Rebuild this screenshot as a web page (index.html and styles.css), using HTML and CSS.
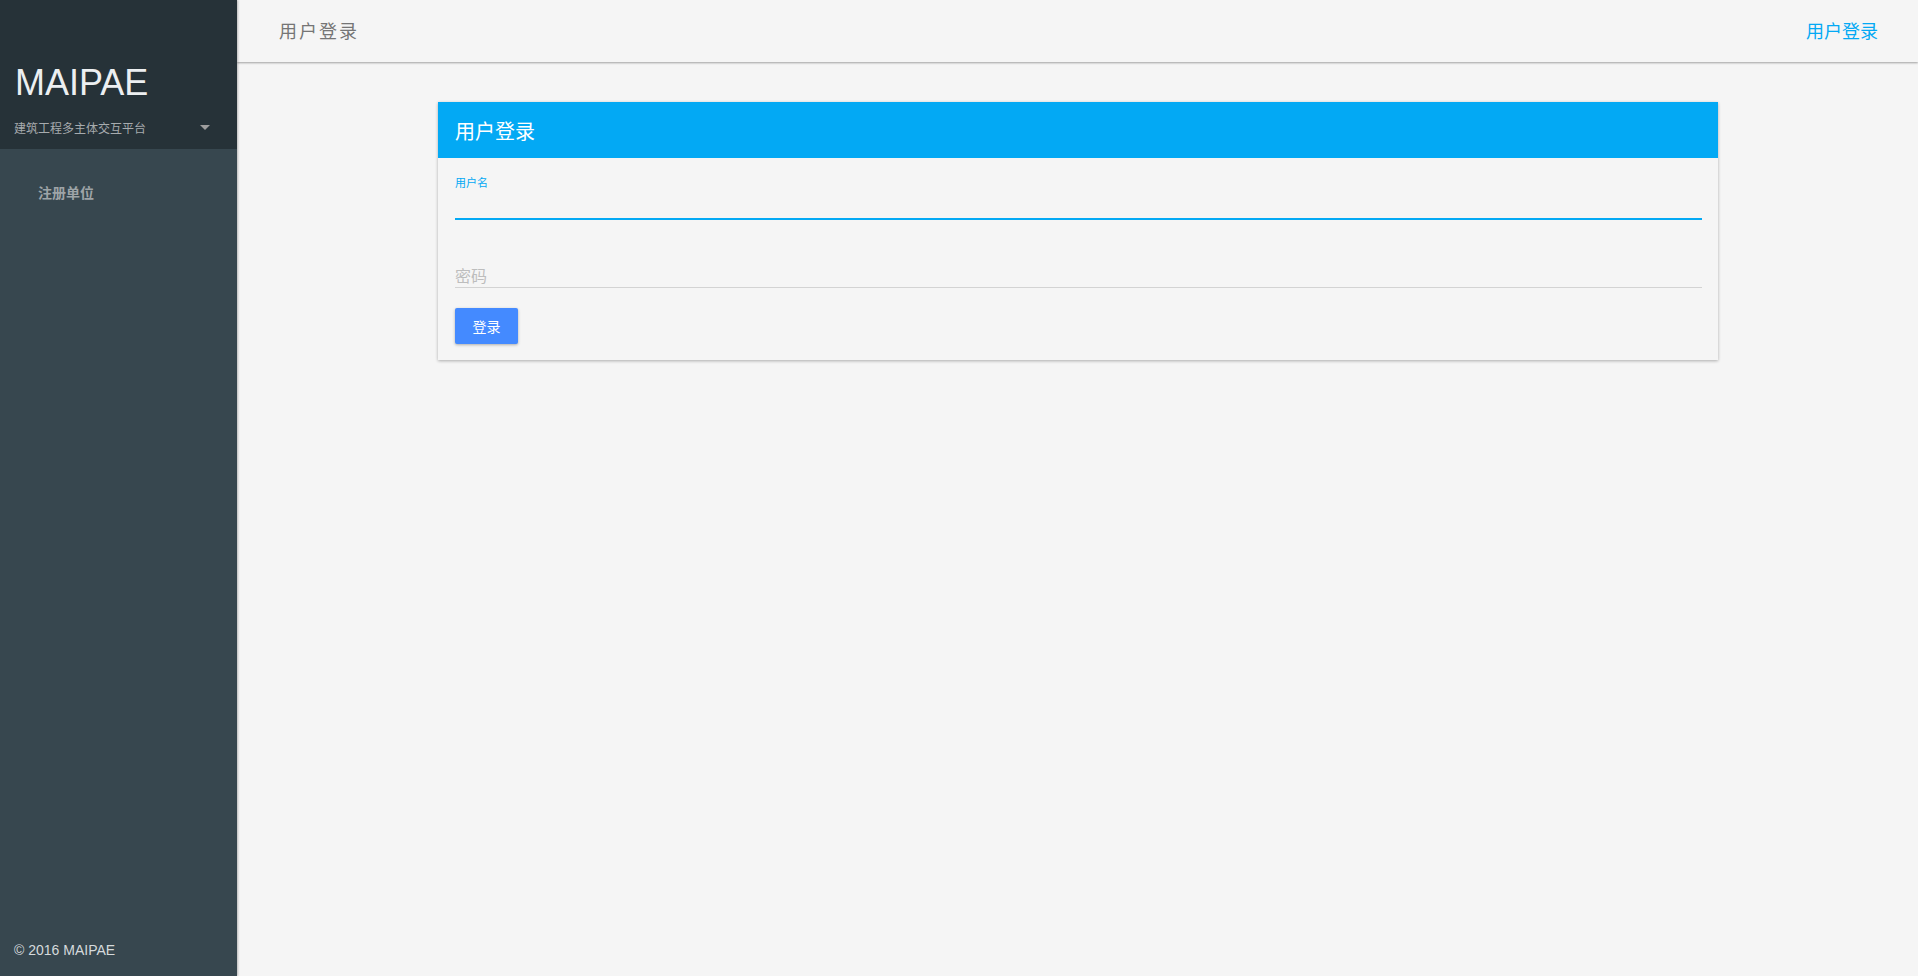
FILE: index.html
```html
<!DOCTYPE html>
<html lang="zh-CN">
<head>
    <meta charset="UTF-8">
    <meta name="viewport" content="width=device-width, initial-scale=1.0">
    <title>用户登录</title>
    <link rel="stylesheet" href="styles.css">
</head>
<body>

<div class="layout">
    <aside class="sidebar">
        <div class="brand">
            <div class="brand-name">MAIPAE</div>
            <div class="brand-sub">
                <span>建筑工程多主体交互平台</span>
                <span class="caret"></span>
            </div>
        </div>
        <nav class="menu">
            <a class="menu-item" href="#">注册单位</a>
        </nav>
        <div class="copyright">© 2016 MAIPAE</div>
    </aside>

    <div class="main">
        <header class="topbar">
            <div class="topbar-title">用户登录</div>
            <a class="topbar-link" href="#">用户登录</a>
        </header>

        <div class="content">
            <div class="card">
                <div class="card-header">用户登录</div>
                <div class="card-body">
                    <div class="field field-active">
                        <label for="username">用户名</label>
                        <input type="text" id="username">
                    </div>
                    <div class="field">
                        <input type="password" id="password" placeholder="密码">
                    </div>
                    <button class="btn-login">登录</button>
                </div>
            </div>
        </div>
    </div>
</div>

</body>
</html>
```

FILE: styles.css
```css
html, body{
    height:100%;
}
body{
    margin:0;
    padding:0;
    font-family:"Liberation Sans", Arial, "Noto Sans CJK SC", sans-serif;
    background-color:#f5f5f5;
}
.layout{
    display:flex;
    height:100%;
}
.sidebar{
    width:237px;
    flex-shrink:0;
    display:flex;
    flex-direction:column;
    background-color:#37474f;
    box-shadow:1px 0 2px rgba(0, 0, 0, 0.25);
    position:relative;
    z-index:2;
}
.brand{
    height:149px;
    box-sizing:border-box;
    padding:62px 0 0 14px;
    background-color:#263238;
}
.brand-name{
    font-size:36px;
    line-height:41px;
    color:#eceff1;
    padding-left:1px;
}
.brand-sub{
    display:flex;
    align-items:center;
    justify-content:space-between;
    margin-top:16px;
    padding-right:27px;
    font-size:12px;
    color:#a6abae;
}
.caret{
    width:0;
    height:0;
    border-left:5px solid transparent;
    border-right:5px solid transparent;
    border-top:5px solid #9e9e9e;
}
.menu{
    flex:1;
    padding-top:33px;
}
.menu-item{
    display:block;
    padding-left:38px;
    font-family:"Noto Sans CJK SC", sans-serif;
    font-size:14px;
    font-weight:700;
    color:#9ea4a7;
    text-decoration:none;
}
.copyright{
    padding:0 0 18px 14px;
    font-size:14px;
    color:#d5dadc;
}
.main{
    flex:1;
    display:flex;
    flex-direction:column;
}
.topbar{
    height:62px;
    flex-shrink:0;
    display:flex;
    align-items:center;
    justify-content:space-between;
    padding:0 40px 0 42px;
    background-color:#f5f5f5;
    box-shadow:0 1px 2px rgba(0, 0, 0, 0.35);
    position:relative;
    z-index:1;
}
.topbar-title{
    font-size:18px;
    letter-spacing:2px;
    color:#757575;
    margin-top:-2px;
}
.topbar-link{
    font-size:18px;
    color:#03a9f4;
    text-decoration:none;
    margin-top:-2px;
}
.content{
    padding:40px 0 0 201px;
}
.card{
    width:1280px;
    background-color:#f5f5f5;
    box-shadow:0 1px 3px rgba(0, 0, 0, 0.3);
}
.card-header{
    height:56px;
    box-sizing:border-box;
    padding:0 17px;
    display:flex;
    align-items:center;
    background-color:#03a9f4;
    color:white;
    font-size:20px;
}
.card-body{
    padding:18px 16px 16px 17px;
}
.field{
    display:flex;
    flex-direction:column;
}
.field label{
    font-size:11px;
    line-height:14px;
    color:#03a9f4;
}
.field input{
    border:none;
    background:transparent;
    outline:none;
    font-family:inherit;
    font-size:16px;
    padding:0;
    height:20px;
    border-bottom:1px solid #d3d3d3;
}
.field-active input{
    height:28px;
    border-bottom:2px solid #03a9f4;
}
.field + .field{
    margin-top:47px;
}
.field input::placeholder{
    color:#bdbdbd;
}
.btn-login{
    margin-top:20px;
    width:63px;
    height:36px;
    border:none;
    border-radius:2px;
    background-color:#448aff;
    color:white;
    font-family:inherit;
    font-size:14px;
    box-shadow:0 1px 3px rgba(0, 0, 0, 0.3);
    cursor:pointer;
}
```
